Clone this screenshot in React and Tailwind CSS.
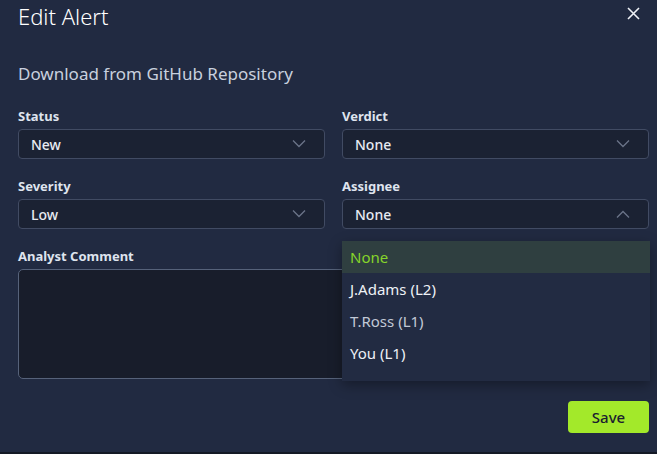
import React from "react";

function Chevron({ up }) {
  return (
    <svg width="14" height="8" viewBox="0 0 14 8" fill="none" stroke="#6b7489" strokeWidth="1.3">
      {up ? <path d="M1 7.5 L7 1.5 L13 7.5" /> : <path d="M1 0.5 L7 6.5 L13 0.5" />}
    </svg>
  );
}

function Field({ label, value, up, children }) {
  return (
    <div className="relative flex flex-col">
      <div className="text-[13px] font-bold leading-[18px] text-[#dfe4ee]">{label}</div>
      <div className="mt-[4px] flex h-[30px] items-center justify-between rounded-[4px] border border-[#414b63] bg-[#1b2233] pl-[12px] pr-[18px]">
        <span className="text-[14px] font-medium text-[#e8ebf2]">{value}</span>
        <Chevron up={up} />
      </div>
      {children}
    </div>
  );
}

export default function App() {
  const font = { fontFamily: '"Noto Sans", "Open Sans", sans-serif' };
  return (
    <div className="h-[454px] w-[657px] bg-[#141925]" style={font}>
      <div className="relative flex h-[452px] flex-col bg-[#212a41] pl-[18px] pr-[8px]">
        <div className="flex h-[32px] items-center justify-between">
          <h1 className="text-[22px] font-light leading-[32px] text-white">Edit Alert</h1>
          <svg width="13" height="13" viewBox="0 0 13 13" className="mr-[9px] mt-[-6px]" stroke="#eef1f6" strokeWidth="1.6">
            <path d="M1 1 L12 12 M12 1 L1 12" />
          </svg>
        </div>
        <div className="mt-[30px] text-[17px] leading-[24px] text-[#c8d0de]">Download from GitHub Repository</div>
        <div className="mt-[21px] grid grid-cols-2 gap-x-[17px] gap-y-[18px]">
          <Field label="Status" value="New" />
          <Field label="Verdict" value="None" />
          <Field label="Severity" value="Low" />
          <Field label="Assignee" value="None" up>
            <div className="absolute left-0 right-[-1px] top-[64px] z-10 bg-[#222b42] pb-[12px] shadow-[0_4px_12px_rgba(0,0,0,0.35)]">
              <div className="flex h-[32px] items-center bg-[#2f3f40] px-[8px] text-[15px] text-[#86d42a]">None</div>
              <div className="flex h-[32px] items-center px-[8px] text-[15px] text-[#eef1f6]">J.Adams (L2)</div>
              <div className="flex h-[32px] items-center px-[8px] text-[15px] text-[#c2c9d6]">T.Ross (L1)</div>
              <div className="flex h-[32px] items-center px-[8px] text-[15px] text-[#eef1f6]">You (L1)</div>
            </div>
          </Field>
        </div>
        <div className="mt-[18px] flex flex-col">
          <div className="text-[13px] font-bold leading-[18px] text-[#dfe4ee]">Analyst Comment</div>
          <div className="mt-[4px] h-[110px] rounded-[5px] border border-[#56627a] bg-[#181d2b]"></div>
        </div>
        <div className="mt-[22px] flex justify-end">
          <button className="h-[32px] w-[81px] rounded-[4px] bg-[#a3e92a] text-[15px] font-medium text-[#1a2030]">Save</button>
        </div>
      </div>
    </div>
  );
}
